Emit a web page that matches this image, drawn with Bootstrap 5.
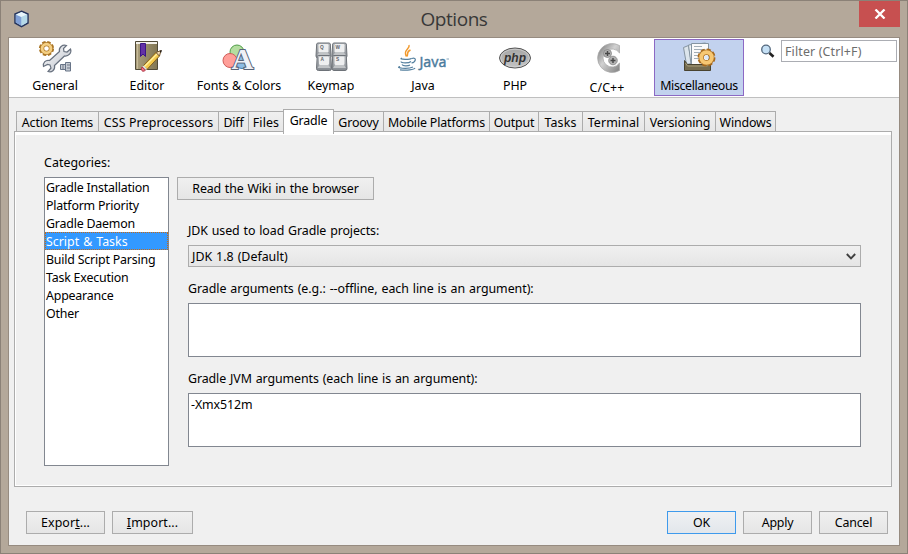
<!DOCTYPE html>
<html lang="en">
<head>
<meta charset="utf-8">
<title>Options</title>
<link href="https://cdn.jsdelivr.net/npm/bootstrap@5.3.0/dist/css/bootstrap.min.css" rel="stylesheet">
<style>
body{width:908px;height:554px;overflow:hidden;font:12.4px/18px "Noto Sans","Open Sans",sans-serif;letter-spacing:-.22px;color:#000;background:#b4a89a}
.frame{width:908px;height:554px;border:1px solid #8b8177;background:#b4a89a;padding:0 7px 7px}
.titlebar{height:36px;position:relative}
.titlebar h1{font:19px/36px "Open Sans","Noto Sans",sans-serif;letter-spacing:-.45px;color:#383838;margin:0}
.appicon{position:absolute;left:5px;top:9px}
.closer{position:absolute;right:0;top:0;width:41px;height:26px;background:#c75050;border:0;padding:0}
.client{height:509px;border:1px solid #968b80;background:#f0f0f0}
.tools{height:60px;background:#fff;border-bottom:1px solid #bfbfbf;padding:1px 2px 1px 1px}
.tool{width:90px;height:57px;margin-right:2px;border:1px solid transparent;background:none;padding:0;color:#000;text-align:center;white-space:nowrap}
.tool svg{width:90px;height:36px;margin-left:-1px;flex:none}
.tool.active{background:#c2d2ee;border-color:#8c69c4}
.tool span{line-height:18px;margin-top:1px}
.tool.active span{letter-spacing:-.37px}
.filterbox{width:116px;height:22px;border:1px solid #abadb3;border-radius:0;padding:0 0 0 3px;margin-top:1px;font:inherit;letter-spacing:.15px;min-height:0}
.filterbox::placeholder{color:#6d6d6d;opacity:1}
.tabrow{height:24px;margin:12px 0 0 7px;position:relative;z-index:1;border:0;flex-wrap:nowrap;align-items:flex-end}
.tabrow .nav-link{height:21px;margin:0 0 2px -1px;padding:0;border:1px solid #acacac;border-radius:0;background:linear-gradient(#f0f0f0,#e6e6e6);color:#000;line-height:22px;letter-spacing:-.15px;text-align:center;white-space:nowrap}
.tabrow .nav-link.active{height:25px;margin-bottom:0;background:#fff;border-color:#acacac;border-bottom:0;color:#000;line-height:22px}
.tabrow .nav-link.roomy{letter-spacing:.12px}
.pane{width:878px;height:356px;margin:-3px 0 0 5px;border:1px solid #acacac;background:#f0f0f0;box-shadow:inset 1px 0 #fff,inset 0 3px #fff,inset 0 -1px #fff;padding:22px 30px 0 29px}
.pane-label{letter-spacing:.05px}
.cats{width:125px;height:289px;background:#fff;border:1px solid #828790;border-radius:0;padding:0;margin-top:5px}
.cats .list-group-item{height:18px;border:0;padding:0 0 0 1px;color:#000;line-height:19px;letter-spacing:-.2px;background:#fff;white-space:nowrap}
.cats .list-group-item.active{background:#39f;color:#fff;outline:1px dotted #c86a14;outline-offset:-1px;margin:0}
.cats .list-group-item.spaced{letter-spacing:0;word-spacing:.8px}
.winbtn{height:23px;border:1px solid #acacac;border-radius:0;background:linear-gradient(#f0f0f0,#e5e5e5);font:inherit;letter-spacing:inherit;line-height:21px;padding:0;color:#000}
.winbtn.main{border-color:#3e9aec;background:linear-gradient(#eff1f3,#e2e6eb)}
.winbtn.wiki{letter-spacing:-.15px;word-spacing:.8px;line-height:22px}
.winbtn.files{letter-spacing:.1px}
.settings{margin:23px 0 0 8px;width:684px}
.fields{margin-left:11px;width:673px;letter-spacing:-.09px;word-spacing:.8px}
.combo{height:22px;border:1px solid #acacac;border-radius:0;background:linear-gradient(#f0f0f0,#e5e5e5);padding:0 4px 0 3px;line-height:21px;letter-spacing:0}
.area{height:54px;border:1px solid #828790;border-radius:0;background:#fff;padding:1px 2px;font:inherit;letter-spacing:inherit;line-height:19px;resize:none;display:block;width:100%}
.foot{margin:24px 11px 0 17px}
</style>
</head>
<body>
<div class="frame">
 <header class="titlebar text-center">
  <svg class="appicon" width="17" height="18" viewBox="0 0 17 18"><path d="M8.5 1.2 15 4v9l-6.5 3.6L2 13V4z" fill="#b8d4ef" stroke="#25345c" stroke-width="1.5"/><path d="m2.8 4.7 5.7 2.4v8.6l-5.7-3.1z" fill="#7f9fd6"/><path d="m3 4.4 5.5-2.3L14 4.4 8.5 7z" fill="#e8f6fb"/><path d="m14.2 4.7-5.7 2.4v8.6l5.7-3.1z" fill="#b5d9e8"/></svg>
  <h1>Options</h1>
  <button class="closer d-flex align-items-center justify-content-center" aria-label="Close"><svg width="12" height="10" viewBox="0 0 12 10"><path d="m1.500.5 9 9m0-9-9 9" stroke="#fff" stroke-width="2.300"/></svg></button>
 </header>
 <main class="client">
  <nav class="tools d-flex">
   <button class="tool d-flex flex-column"><svg viewBox="0 0 90 36">
     <defs><linearGradient id="steel" x2="1" y2="1"><stop stop-color="#fff"/><stop offset="1" stop-color="#b9bec8"/></linearGradient></defs>
     <circle cx="36.5" cy="8.500" r="5.900" fill="none" stroke="#a87424" stroke-width="3.400" stroke-dasharray="3.100 1.530"/><circle cx="36.500" cy="8.500" r="4.400" fill="none" stroke="#b17a27" stroke-width="4.200"/><circle cx="36.500" cy="8.500" r="4.400" fill="none" stroke="#f4cf83" stroke-width="2.800"/>
     <path d="M33.500 26.500c-1-4 2.500-7 6-6l10-9c-1-4 3-7.500 7-6l-3 3 .5 3 3 .5 3.500-3c1.500 4-2 7.500-6 7l-10 9.500c1 4.500-3 7.500-6.500 6l3-3.500-1-3-2.500-.5z" fill="url(#steel)" stroke="#68717f" stroke-width="1.200"/>
     <path d="M50.500 24.500h5v5h-5zM55.500 22.500h5v8.500h-5z" fill="#c6cbd3" stroke="#687487"/><path d="M57 25h3m-3 3h3m-7-3v4" stroke="#707987"/></svg><span>General</span></button>
   <button class="tool d-flex flex-column"><svg viewBox="0 0 90 36">
     <defs><linearGradient id="cover"><stop stop-color="#ada17e"/><stop offset="1" stop-color="#817653"/></linearGradient></defs>
     <path d="M33.500 1.500h22v28h-22z" fill="url(#cover)" stroke="#504a38"/><path d="M34 2h21v2H34z" fill="#f4f2eb"/><path d="M35.500 4v25" stroke="#c7bc9a"/><path d="M38.500 3.500h5v13L41 14l-2.500 2.500z" fill="#6331a6" stroke="#3c1686"/>
     <path d="M41 26 54 12.500l3.500 3.500L45 29.500z" fill="#f4c94c" stroke="#83601d"/><path d="m42.500 26.500 13-13" stroke="#fff1a1" stroke-width="1.300"/><path d="m54 12.500 5-2-1.500 5.500z" fill="#f3dab0" stroke="#765a32"/><path d="m57.500 11 2.500-1-1 3z" fill="#201b18"/><path d="m40 27 3.500 3c-2 2.500-5.500 1-3.500-3z" fill="#ef7585" stroke="#ae3545"/><path d="m41 26 3.500 3.500" stroke="#dce3ef" stroke-width="1.500"/></svg><span>Editor</span></button>
   <button class="tool d-flex flex-column"><svg viewBox="0 0 90 36"><circle cx="43" cy="12" r="7" fill="#b4dea0" stroke="#519d48"/><circle cx="48" cy="22" r="6.500" fill="#8bbce5" stroke="#4179ae"/><circle cx="36" cy="20.500" r="7" fill="#ff9f99" stroke="#cf5c58"/><text x="37.500" y="28.500" font-family="Liberation Serif,serif" font-size="30" font-weight="bold" textLength="22" lengthAdjust="spacingAndGlyphs" fill="#eef1f6" stroke="#596478" stroke-width="2" paint-order="stroke" letter-spacing="0">A</text></svg><span>Fonts &amp; Colors</span></button>
   <button class="tool d-flex flex-column"><svg viewBox="0 0 90 36">
     <defs><linearGradient id="keyside" x2="0" y2="1"><stop stop-color="#b9bcc0"/><stop offset="1" stop-color="#858a90"/></linearGradient><g id="keycap"><path d="M2.500.5h11q1 0 1.300 1l.7 12q0 2-2 2h-11q-2 0-2-2l.7-12q.3-1 1.300-1z" fill="url(#keyside)" stroke="#6d7278"/><rect x="3" y="1.500" width="10" height="8.500" rx="1.200" fill="#eeeff0"/><path d="m1.500 13 2-3h9l2 3" fill="#c0c3c6"/></g></defs>
     <use href="#keycap" x="29.500" y="2.500"/><use href="#keycap" x="45.500" y="2.500"/><use href="#keycap" x="30" y="15"/><use href="#keycap" x="45.500" y="15"/><g font-family="Liberation Sans,sans-serif" font-size="4.800" font-weight="bold" fill="#62666b"><text x="34" y="8.500">Q</text><text x="49.500" y="8.500">W</text><text x="34.500" y="21">A</text><text x="50" y="21">S</text></g></svg><span>Keymap</span></button>
   <button class="tool d-flex flex-column"><svg viewBox="0 0 90 36"><path d="M31 5c1.500 4-6.500 5-2.500 11.500m4-6.500c-4.500 2-2 3.500-3.500 6.500" fill="none" stroke="#f29a2e" stroke-width="1.500"/><g fill="none" stroke="#55809f" stroke-width="1.200"><path d="M24 18c-5 1.500 10 2 9.500 0M23 21.500c0 1.800 8 1.800 10 0M24 24.500c1 1.800 6 1.800 8 .5"/><path d="M34 18.500c5-1.500 4 3.500-.5 4.500M22 26.500c-6 1.500 8 3 13 .5M22 29.800c7 .8 14 0 15-1.800"/></g><text x="41.500" y="27" font-family="Noto Sans,sans-serif" font-size="14.500" textLength="27" lengthAdjust="spacingAndGlyphs" fill="#4b7b9d" stroke="#4b7b9d" stroke-width=".4">Java</text><path d="M68.500 19H71" stroke="#87a4ba"/></svg><span>Java</span></button>
   <button class="tool d-flex flex-column"><svg viewBox="0 0 90 36">
     <defs><linearGradient id="phpfill" x2="0" y2="1"><stop stop-color="#a5a5a5"/><stop offset="1" stop-color="#c4c4c4"/></linearGradient></defs><ellipse cx="45" cy="18" rx="15.500" ry="10" fill="url(#phpfill)" stroke="#555"/><ellipse cx="45" cy="18" rx="14.300" ry="8.800" fill="none" stroke="#d6d6d6" stroke-width=".7"/><text x="34" y="21.500" font-family="Liberation Sans,sans-serif" font-size="13" font-weight="bold" font-style="italic" textLength="22" lengthAdjust="spacingAndGlyphs" fill="#333">php</text></svg><span>PHP</span></button>
   <button class="tool d-flex flex-column"><svg viewBox="0 0 90 36">
     <defs><linearGradient id="cmetal" x2="1" y2="1"><stop stop-color="#858585"/><stop offset=".2" stop-color="#999"/><stop offset=".45" stop-color="#d2d2d2"/><stop offset="1" stop-color="#808080"/></linearGradient></defs><path d="M57.500 5.500a14.500 14.500 0 1 0 0 25v-7.500a9 9 0 1 1 0-10z" fill="url(#cmetal)" stroke="#a5a5a5" stroke-width=".7"/><g fill="#b2b2b2" stroke="#858585" stroke-width=".8"><circle cx="45.500" cy="13.500" r="4"/><circle cx="51" cy="20.500" r="4.300"/></g><path d="M43 13.500h5M45.500 11v5m3 4.500h5M51 18v5" stroke="#484848" stroke-width="1.400"/></svg><span style="margin-top:3px;letter-spacing:.1px">C/C++</span></button>
   <button class="tool active d-flex flex-column"><svg viewBox="0 0 90 36">
     <path d="m29.500 7.500 5-2 3 18-5 1z" fill="#dce5ec" stroke="#8593a0"/><path d="m34.500 5 17-2 4 21H37z" fill="#edf2f6" stroke="#8393a0"/><path d="m37.500 3.500h17v22h-17z" fill="#fafafa" stroke="#8494a1"/><path d="M40 6.500h8m-8 3h11m-11 3h8m-8 3h6m-6 3h7" stroke="#a2adb6"/>
     <path d="m30.500 20.500 3 4h20l3-4v10h-26z" fill="#756c50" stroke="#49432f"/><path d="m31.500 23 2 3h20l2-3" stroke="#a99d78" fill="none"/>
     <circle cx="52.500" cy="17.500" r="7" fill="none" stroke="#a7681c" stroke-width="4" stroke-dasharray="3.600 1.898"/><circle cx="52.500" cy="17.500" r="5.300" fill="none" stroke="#a86d20" stroke-width="5.400"/><circle cx="52.500" cy="17.500" r="5.300" fill="none" stroke="#f7c873" stroke-width="4"/><circle cx="52.500" cy="17.500" r="2.200" fill="#dfe9f5"/></svg><span>Miscellaneous</span></button>
   <div class="ms-auto d-flex align-items-start">
    <svg width="16" height="16" viewBox="0 0 16 16" style="margin:5px 5px 0 0"><circle cx="6" cy="5.500" r="4.300" fill="#c5e0f5" stroke="#53687e" stroke-width="1.300"/><path d="m9.500 9 4 3.800" stroke="#202020" stroke-width="2.600"/></svg>
    <input class="form-control filterbox" placeholder="Filter (Ctrl+F)">
   </div>
  </nav>
  <div class="nav nav-tabs tabrow">
   <a class="nav-link ms-0" style="width:83px">Action Items</a><a class="nav-link roomy" style="width:121px">CSS Preprocessors</a><a class="nav-link" style="width:31px">Diff</a><a class="nav-link roomy" style="width:36px">Files</a><a class="nav-link active" style="width:51px">Gradle</a><a class="nav-link" style="width:51px">Groovy</a><a class="nav-link" style="width:107px">Mobile Platforms</a><a class="nav-link" style="width:50px">Output</a><a class="nav-link roomy" style="width:45px">Tasks</a><a class="nav-link roomy" style="width:63px">Terminal</a><a class="nav-link" style="width:72px">Versioning</a><a class="nav-link" style="width:61px">Windows</a>
  </div>
  <section class="pane d-flex">
   <div><div class="pane-label">Categories:</div>
    <div class="list-group cats"><div class="list-group-item">Gradle Installation</div><div class="list-group-item">Platform Priority</div><div class="list-group-item">Gradle Daemon</div><div class="list-group-item active spaced">Script &amp; Tasks</div><div class="list-group-item">Build Script Parsing</div><div class="list-group-item">Task Execution</div><div class="list-group-item">Appearance</div><div class="list-group-item">Other</div></div>
   </div>
   <div class="settings">
    <button class="btn winbtn wiki d-block" style="width:197px">Read the Wiki in the browser</button>
    <div class="fields">
     <div style="margin:22px 0 5px">JDK used to load Gradle projects:</div>
     <div class="combo d-flex justify-content-between align-items-center"><span>JDK 1.8 (Default)</span><svg width="10" height="7" viewBox="0 0 10 7"><path d="m.8 1 4.200 4.300L9.200 1" fill="none" stroke="#404040" stroke-width="1.900"/></svg></div>
     <div style="margin:13px 0 5px;letter-spacing:-.05px">Gradle arguments (e.g.: --offline, each line is an argument):</div>
     <textarea class="area"></textarea>
     <div style="margin:13px 0 5px">Gradle JVM arguments (each line is an argument):</div>
     <textarea class="area" spellcheck="false">-Xmx512m</textarea>
    </div>
   </div>
  </section>
  <footer class="foot d-flex">
   <button class="btn winbtn files" style="width:79px">Expor<u>t</u>...</button><button class="btn winbtn files" style="width:81px;margin-left:7px"><u>I</u>mport...</button>
   <button class="btn winbtn main ms-auto" style="width:69px">OK</button><button class="btn winbtn" style="width:69px;margin-left:7px">Apply</button><button class="btn winbtn" style="width:69px;margin-left:7px">Cancel</button>
  </footer>
 </main>
</div>
<script src="https://cdn.jsdelivr.net/npm/bootstrap@5.3.0/dist/js/bootstrap.bundle.min.js"></script>
</body>
</html>
